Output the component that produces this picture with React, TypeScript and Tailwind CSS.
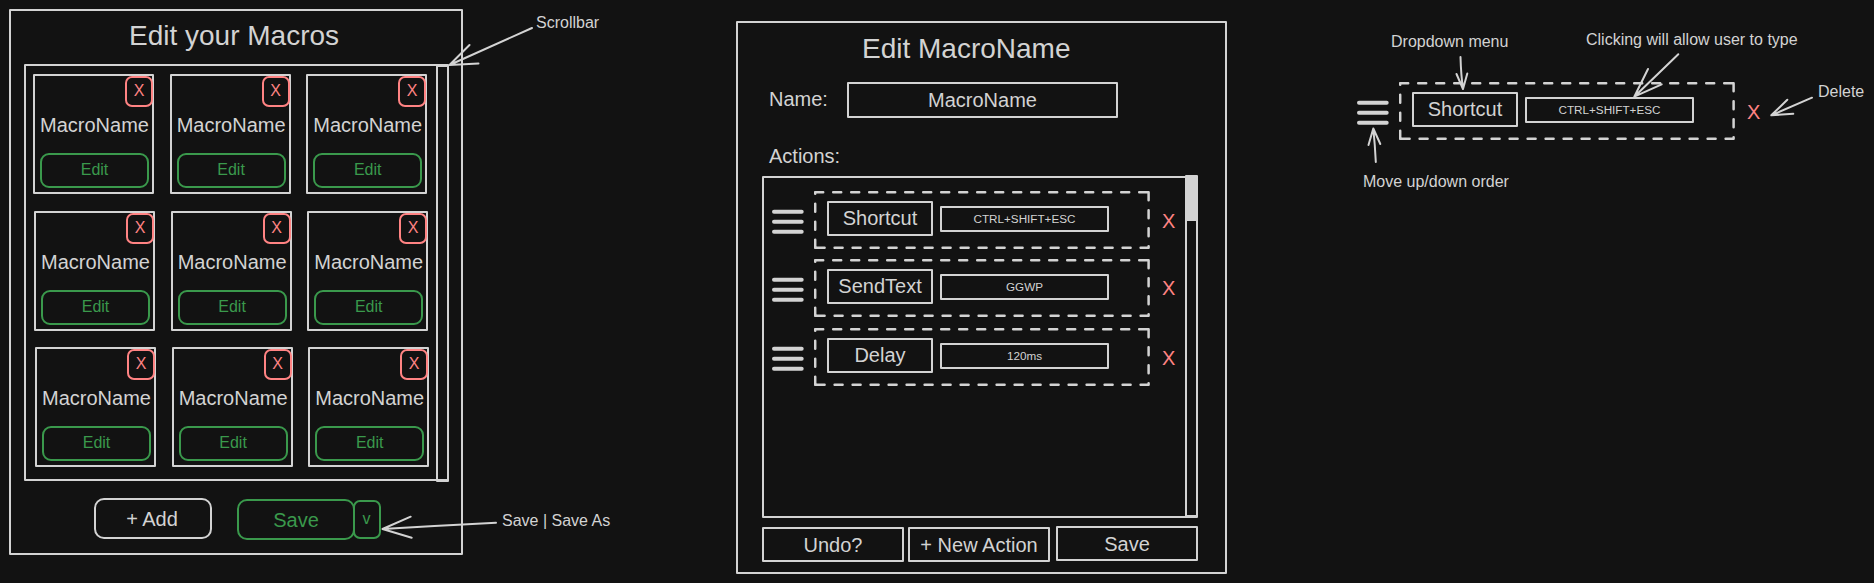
import type { ReactNode } from "react";

const MACRO_ROWS = [
  { id: "top", className: "ml-0" },
  { id: "middle", className: "ml-px mt-[17px]" },
  { id: "bottom", className: "ml-[2px] mt-4" },
];

function MacroCard() {
  return (
    <div className="relative flex h-[120px] w-[121px] shrink-0 flex-col items-center rounded-[1px] border-2 border-[#d3d3d3] pl-[5px] pr-[3px] pt-[37px]">
      <button className="absolute -right-px top-0 flex h-[31px] w-7 items-center justify-center rounded-[7px] border-2 border-[#ff8383] pb-[2px] text-base leading-none text-[#ff8383]">
        X
      </button>
      <div className="text-xl leading-6">MacroName</div>
      <button className="mt-4 flex h-[35px] w-[109px] shrink-0 items-center justify-center rounded-[9px] border-2 border-[#3a994c] pb-[2px] text-base leading-none text-[#3a994c]">
        Edit
      </button>
    </div>
  );
}

function MacroListPanel() {
  return (
    <section className="ml-[9px] mt-[9px] flex h-[546px] w-[454px] shrink-0 flex-col rounded-[1px] border-2 border-[#d3d3d3]">
      <h1 className="mt-[9px] pl-[118px] text-[28px] leading-[31px]">Edit your Macros</h1>
      <div className="ml-[13px] mt-[13px] flex h-[417px] w-[425px] shrink-0 rounded-[1px] border-2 border-[#d3d3d3]">
        <div className="ml-[7px] mt-2">
          {MACRO_ROWS.map((row) => (
            <div key={row.id} className={row.className}>
              <div className="flex gap-[15.6px]">
                <MacroCard />
                <MacroCard />
                <MacroCard />
              </div>
            </div>
          ))}
        </div>
        <div className="-mr-[2px] -mt-px ml-auto h-[417px] w-[13px] shrink-0 rounded-[1px] border-2 border-[#d3d3d3]" />
      </div>
      <div className="ml-[83px] mt-[17px] flex items-start">
        <button className="flex h-[41px] w-[118px] items-center justify-center rounded-[10px] border-2 border-[#d3d3d3] pr-[2px] text-xl leading-none">
          + Add
        </button>
        <button className="ml-[25px] mt-px flex h-[41px] w-[118px] items-center justify-center rounded-[10px] border-2 border-[#3a994c] text-xl leading-none text-[#3a994c]">
          Save
        </button>
        <button className="-ml-[2px] mt-[2px] flex h-[39px] w-7 items-center justify-center rounded-[7px] border-2 border-[#3a994c] pb-px pr-px text-base leading-none text-[#3a994c]">
          v
        </button>
      </div>
    </section>
  );
}

function ActionRow({ type, value, deleteClass }: { type: string; value: string; deleteClass: string }) {
  return (
    <div className="flex h-[58px] shrink-0">
      <svg className="mt-[17px] h-7 w-8 shrink-0" viewBox="0 0 32 28" fill="none" stroke="#d3d3d3" strokeWidth="4" strokeLinecap="round">
        <path d="M2 3.7H29.7M2 13.7H29.7M2 23.7H29.7" />
      </svg>
      <div className="relative ml-[10px] flex h-[58px] w-[336px] shrink-0">
        <svg className="absolute inset-0 h-full w-full" viewBox="0 0 336 58" fill="none" stroke="#d3d3d3" strokeWidth="2.5" strokeLinecap="round" strokeDasharray="8 10">
          <path d="M1.2 1.2H334.6M334.6 1.2V56.8M334.6 56.8H1.2M1.2 56.8V1.2" />
        </svg>
        <div className="ml-[13px] mt-[10px] flex h-[35px] w-[106px] items-center justify-center rounded-[1px] border-2 border-[#d3d3d3] pb-[2px] text-xl leading-none">
          {type}
        </div>
        <div className="ml-[7px] mt-[15px] flex h-[26px] w-[169px] items-center justify-center rounded-[1px] border-2 border-[#d3d3d3] pb-px text-[11.7px] leading-none">
          {value}
        </div>
      </div>
      <button className={"ml-3 self-start text-xl leading-6 text-[#ff8383] " + deleteClass}>X</button>
    </div>
  );
}

function FooterButton({ className, children }: { className: string; children: ReactNode }) {
  return (
    <button className={"flex items-center justify-center whitespace-nowrap rounded-[1px] border-2 border-[#d3d3d3] text-xl leading-none " + className}>
      {children}
    </button>
  );
}

function MacroEditorPanel() {
  return (
    <section className="ml-[273px] mt-[21px] flex h-[553px] w-[491px] shrink-0 flex-col rounded-[1px] border-2 border-[#d3d3d3]">
      <h1 className="mt-[10px] pl-[124px] text-[28px] leading-[31px]">Edit MacroName</h1>
      <div className="ml-[30px] mt-[18px] flex">
        <label className="mt-[5px] w-[79px] pl-px text-xl leading-6">Name:</label>
        <div className="flex h-9 w-[271px] items-center justify-center rounded-[1px] border-2 border-[#d3d3d3] text-xl leading-none">
          MacroName
        </div>
      </div>
      <div className="ml-[31px] mt-[26px] text-xl leading-6">Actions:</div>
      <div className="ml-6 mt-2 flex h-[342px] w-[436px] shrink-0 rounded-[1px] border-2 border-[#d3d3d3]">
        <div className="ml-2 mt-[13px] flex flex-col">
          <ActionRow type="Shortcut" value="CTRL+SHIFT+ESC" deleteClass="mt-[18px]" />
          <div className="mt-[10px]">
            <ActionRow type="SendText" value="GGWP" deleteClass="mt-[17px]" />
          </div>
          <div className="mt-[11px]">
            <ActionRow type="Delay" value="120ms" deleteClass="mt-[18px]" />
          </div>
        </div>
        <div className="-mr-[2px] -mt-[3px] ml-auto h-[342px] w-[13px] shrink-0 rounded-[1px] border-2 border-[#d3d3d3]">
          <div className="h-11 bg-[#d3d3d3]" />
        </div>
      </div>
      <div className="ml-6 mt-[9px] flex items-start">
        <FooterButton className="h-[35px] w-[142px]">Undo?</FooterButton>
        <FooterButton className="ml-1 h-[35px] w-[142px]">+ New Action</FooterButton>
        <FooterButton className="-mt-px ml-[6px] h-[35px] w-[142px]">Save</FooterButton>
      </div>
    </section>
  );
}

function Note({ className, children }: { className: string; children: ReactNode }) {
  return <div className={"absolute whitespace-nowrap text-base leading-[17px] " + className}>{children}</div>;
}

function Arrows() {
  return (
    <svg className="pointer-events-none absolute inset-0 h-[583px] w-[1874px]" viewBox="0 0 1874 583" fill="none" stroke="#d3d3d3" strokeWidth="2" strokeLinecap="round" strokeLinejoin="round">
      <path d="M532 28L449.5 65M469.5 45L449.5 65L478.5 63.5" />
      <path d="M496 522.7Q440 525.5 382.5 529M410.7 516.7L382.5 529L411.7 537.7" />
      <path d="M1460.5 57Q1461 75 1463 89M1456.5 74L1463 89L1467.3 73.5" />
      <path d="M1678.3 54.3Q1658 74 1634.3 96.7M1648 69L1634.3 96.7L1661.7 84.3" />
      <path d="M1812 97.7L1771.3 115.3M1787.3 99.8L1771.3 115.3L1793.3 113.7" />
      <path d="M1375.8 162Q1375 145 1373.3 128.5M1368.5 145L1373.3 128.5L1380.3 144" />
    </svg>
  );
}

export default function App() {
  return (
    <main className="relative flex h-[583px] w-[1874px] items-start overflow-hidden bg-[#121212] font-['Liberation_Sans',sans-serif] text-[#d3d3d3]">
      <MacroListPanel />
      <MacroEditorPanel />
      <section className="ml-[130px] mt-[82px]">
        <ActionRow type="Shortcut" value="CTRL+SHIFT+ESC" deleteClass="mt-[18px]" />
      </section>
      <Arrows />
      <Note className="left-[536px] top-[14px]">Scrollbar</Note>
      <Note className="left-[502px] top-[512px]">Save | Save As</Note>
      <Note className="left-[1391px] top-[33px]">Dropdown menu</Note>
      <Note className="left-[1586px] top-[31px]">Clicking will allow user to type</Note>
      <Note className="left-[1818px] top-[83px]">Delete</Note>
      <Note className="left-[1363px] top-[173px]">Move up/down order</Note>
    </main>
  );
}
